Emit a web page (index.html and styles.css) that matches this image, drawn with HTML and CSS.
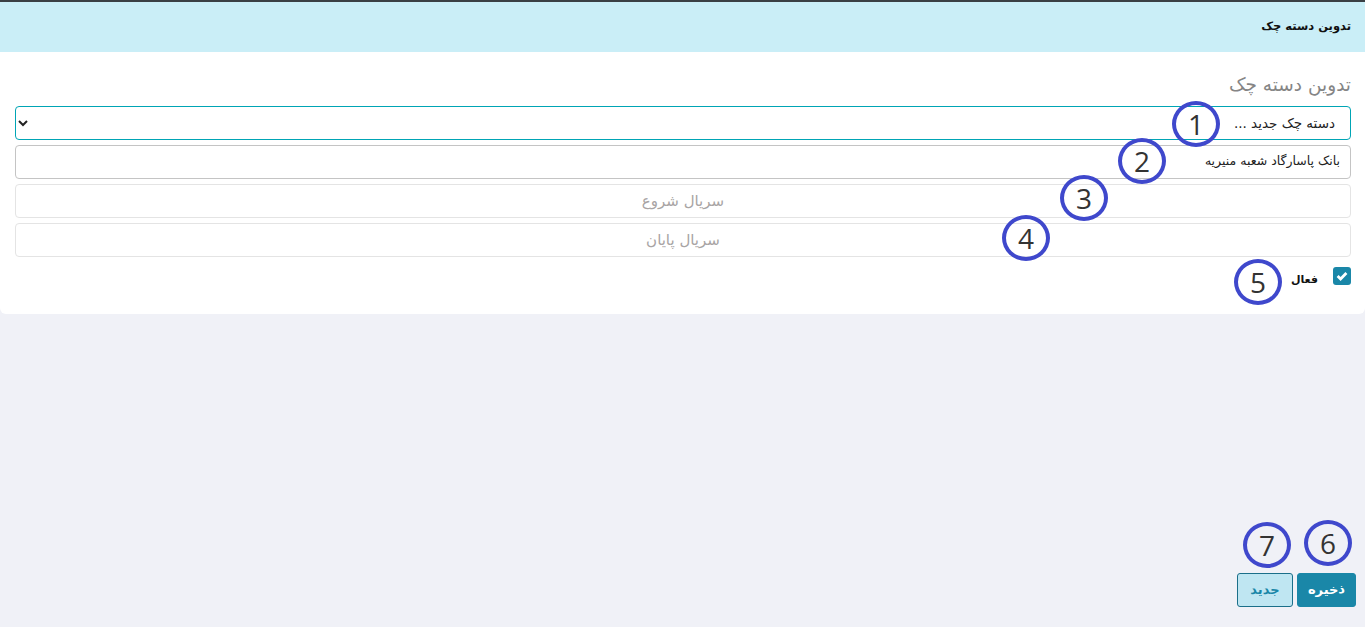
FILE: index.html
```html
<!DOCTYPE html>
<html lang="fa" dir="rtl">
<head>
    <meta charset="UTF-8">
    <title>تدوین دسته چک</title>
    <link rel="stylesheet" href="styles.css">
</head>
<body>
    <div id="page">
        <div id="header">تدوین دسته چک</div>

        <div id="card">
            <h2 id="card-title">تدوین دسته چک</h2>
            <select class="field" id="book">
                <option>دسته چک جدید ...</option>
            </select>
            <input class="field" id="bank" type="text" value="بانک پاسارگاد شعبه منیریه">
            <input class="field serial" type="text" placeholder="سریال شروع">
            <input class="field serial" type="text" placeholder="سریال پایان">
            <label id="active-row">
                <span id="check">
                    <svg viewBox="0 0 18 18" width="18" height="18"><path d="M4.6 9l3 3 5.8-6" fill="none" stroke="#fff" stroke-width="2.8"/></svg>
                </span>
                <span id="active-label">فعال</span>
            </label>
        </div>

        <div id="footer">
            <button class="btn" id="save">ذخیره</button>
            <button class="btn" id="new">جدید</button>
        </div>

        <span class="mark" id="m1">1</span>
        <span class="mark" id="m2">2</span>
        <span class="mark" id="m3">3</span>
        <span class="mark" id="m4">4</span>
        <span class="mark" id="m5">5</span>
        <span class="mark" id="m6">6</span>
        <span class="mark" id="m7">7</span>
    </div>
</body>
</html>
```

FILE: styles.css
```css
* {
    box-sizing: border-box;
}

body {
    margin: 0;
    background-color: #f0f1f7;
    font-family: "DejaVu Sans", "Noto Sans", sans-serif;
}

#page {
    position: relative;
    display: flex;
    flex-direction: column;
    height: 627px;
    border-top: 2px solid #3a3f44;
    overflow: hidden;
}

#header {
    height: 50px;
    padding: 0 14px 2px 14px;
    display: flex;
    align-items: center;
    background-color: #caeef7;
    color: #111;
    font-size: 11.5px;
    font-weight: bold;
}

#card {
    display: flex;
    flex-direction: column;
    gap: 5px;
    height: 262px;
    padding: 22px 14px 0 15px;
    background-color: #fff;
    border-radius: 0 0 6px 6px;
}

#card-title {
    margin: 0 0 5px 0;
    height: 22px;
    line-height: 22px;
    font-size: 18.5px;
    font-weight: normal;
    color: #858585;
}

.field {
    width: 100%;
    height: 34px;
    flex: none;
    background-color: #fff;
    border: 1px solid #c4c4c4;
    border-radius: 4px;
    font-family: inherit;
    font-size: 12.5px;
    color: #222;
    outline: none;
}

#book {
    padding-right: 11px;
    border-color: #00a5b5;
    font-size: 13.5px;
}

#bank {
    padding: 0 10px 3px 10px;
}

.serial {
    padding-bottom: 2px;
    text-align: center;
    border-color: #e4e4e4;
    font-size: 15px;
}

.serial::placeholder {
    color: #a8a4a4;
}

#active-row {
    display: flex;
    align-items: flex-start;
    gap: 15px;
    margin-top: 5px;
}

#check {
    width: 18px;
    height: 18px;
    background-color: #1a87a8;
    border-radius: 3px;
}

#check svg {
    display: block;
}

#active-label {
    font-size: 11px;
    font-weight: bold;
    color: #111;
    margin-top: 6px;
}

#footer {
    display: flex;
    gap: 4px;
    margin-top: auto;
    padding: 0 9px 20px 0;
}

.btn {
    height: 34px;
    border-radius: 3px;
    font-family: inherit;
    font-size: 13px;
    font-weight: bold;
    padding: 0 0 2px 0;
}

#save {
    width: 59px;
    background-color: #1a87a8;
    border: 1px solid #1a87a8;
    color: #fff;
}

#new {
    width: 56px;
    background-color: #bfe6f2;
    border: 1px solid #1b6f8a;
    color: #1a87a8;
}

/* numbered markers drawn over the screenshot */
.mark {
    position: absolute;
    width: 48px;
    height: 46px;
    display: flex;
    align-items: center;
    justify-content: center;
    border: 4px solid #3f48cc;
    border-radius: 50%;
    font-family: "Open Sans", sans-serif;
    font-size: 28px;
    font-weight: 500;
    color: #333;
}

#m1 { left: 1172px; top: 99px; }
#m2 { left: 1118px; top: 136px; }
#m3 { left: 1060px; top: 173px; }
#m4 { left: 1002px; top: 213px; }
#m5 { left: 1234px; top: 257px; }
#m6 { left: 1304px; top: 518px; }
#m7 { left: 1243px; top: 520px; }
```
